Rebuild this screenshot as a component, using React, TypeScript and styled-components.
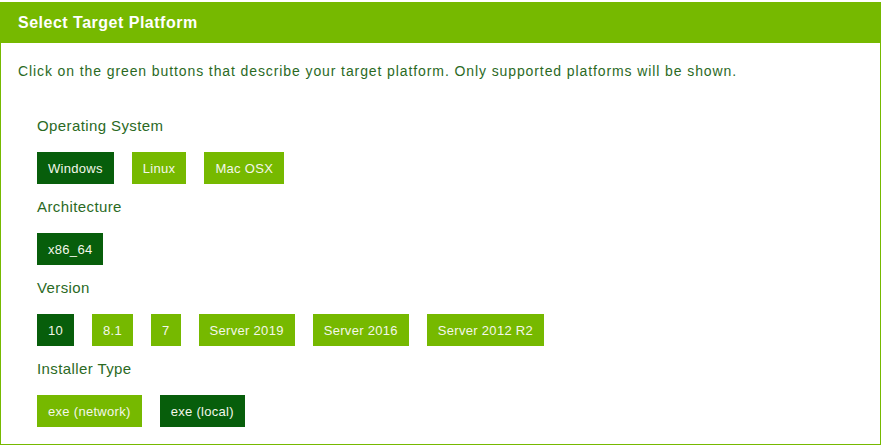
import React from "react";
import styled, { createGlobalStyle } from "styled-components";

const Global = createGlobalStyle`
  html, body { margin: 0; padding: 0; background: #ffffff; }
  body { font-family: "Liberation Sans", Arial, sans-serif; }
`;

const Frame = styled.div`
  margin-top: 2px;
  width: 881px;
  height: 443px;
  box-sizing: border-box;
  border: 1px solid #76b900;
  border-top: none;
  display: flex;
  flex-direction: column;
`;

const Header = styled.div`
  background: #76b900;
  height: 41px;
  display: flex;
  align-items: center;
  padding-left: 17px;
  color: #ffffff;
  font-weight: bold;
  font-size: 16px;
  letter-spacing: 0.5px;
`;

const Body = styled.div`
  padding: 0 17px;
`;

const Intro = styled.p`
  margin: 19px 0 0;
  line-height: 18px;
  font-size: 14px;
  letter-spacing: 0.9px;
  color: #2b6a1f;
`;

const Sections = styled.div`
  padding: 36px 0 0 19px;
  display: flex;
  flex-direction: column;
`;

const Section = styled.div`
  display: flex;
  flex-direction: column;
  margin-bottom: 13px;
`;

const Label = styled.div`
  font-size: 15px;
  line-height: 20px;
  letter-spacing: 0.4px;
  color: #2b6a1f;
  margin-bottom: 16px;
`;

const Row = styled.div`
  display: flex;
  gap: 18px;
`;

const Btn = styled.div<{ $active?: boolean }>`
  height: 32px;
  padding: 0 11px;
  display: flex;
  align-items: center;
  font-size: 13px;
  letter-spacing: 0.3px;
  color: #f4f7ea;
  background: ${(p) => (p.$active ? "#075e0b" : "#76b900")};
  cursor: pointer;
`;

const data: { label: string; items: string[]; active: string }[] = [
  { label: "Operating System", items: ["Windows", "Linux", "Mac OSX"], active: "Windows" },
  { label: "Architecture", items: ["x86_64"], active: "x86_64" },
  {
    label: "Version",
    items: ["10", "8.1", "7", "Server 2019", "Server 2016", "Server 2012 R2"],
    active: "10",
  },
  { label: "Installer Type", items: ["exe (network)", "exe (local)"], active: "exe (local)" },
];

export default function App() {
  return (
    <>
      <Global />
      <Frame>
        <Header>Select Target Platform</Header>
        <Body>
          <Intro>
            Click on the green buttons that describe your target platform. Only supported platforms
            will be shown.
          </Intro>
          <Sections>
            {data.map((s) => (
              <Section key={s.label}>
                <Label>{s.label}</Label>
                <Row>
                  {s.items.map((it) => (
                    <Btn key={it} $active={it === s.active}>
                      {it}
                    </Btn>
                  ))}
                </Row>
              </Section>
            ))}
          </Sections>
        </Body>
      </Frame>
    </>
  );
}
